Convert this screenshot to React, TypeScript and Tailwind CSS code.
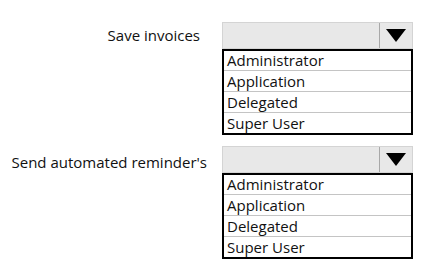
const options = ["Administrator", "Application", "Delegated", "Super User"]

function Combo() {
  return (
    <div className="w-[191px]">
      <div className="flex h-[27px] border border-[#d4d4d4] bg-[#e8e8e8]">
        <div className="flex-1" />
        <div className="flex w-[33px] items-center justify-center border-l border-[#a8a8a8]">
          <svg width="20" height="13" viewBox="0 0 20 13">
            <polygon points="0,0 20,0 10,13" fill="#000" />
          </svg>
        </div>
      </div>
      <div className="border-2 border-black bg-white">
        <div className="h-[20px] border-b border-[#c4c4c4] pl-[3px] text-[15px] leading-[19px]">{options[0]}</div>
        <div className="h-[21px] border-b border-[#c4c4c4] pl-[3px] text-[15px] leading-[20px]">{options[1]}</div>
        <div className="h-[21px] border-b border-[#c4c4c4] pl-[3px] text-[15px] leading-[20px]">{options[2]}</div>
        <div className="h-[20px] pl-[3px] text-[15px] leading-[20px]">{options[3]}</div>
      </div>
    </div>
  )
}

export default function App() {
  return (
    <div className="h-[268px] w-[421px] bg-white pt-[22px] font-['Open_Sans',sans-serif] text-[#111]">
      <div className="flex">
        <div className="w-[222px] pr-[22px] pt-[3px] text-right text-[15px] leading-[20px]">Save invoices</div>
        <Combo />
      </div>
      <div className="mt-[11px] flex">
        <div className="w-[222px] pr-[15px] pt-[6px] text-right text-[15px] leading-[20px]">Send automated reminder's</div>
        <Combo />
      </div>
    </div>
  )
}
